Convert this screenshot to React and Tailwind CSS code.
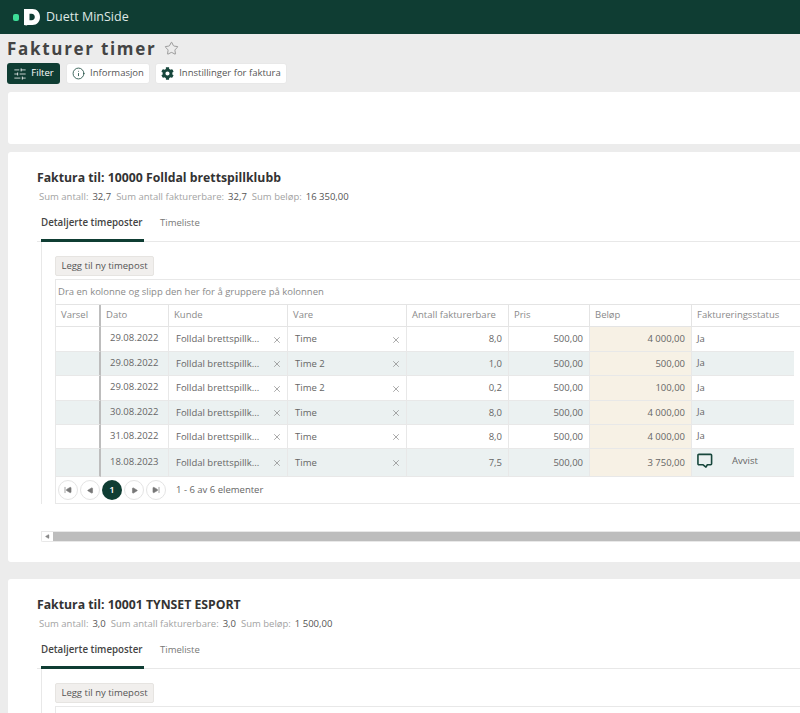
import { Star, SlidersHorizontal, Info, X, SkipBack, SkipForward, Play } from "lucide-react";
import { FaCog } from "react-icons/fa";

const grid = "grid grid-cols-[45px_68px_119px_119px_102px_81px_102px_102px]";
const headGrid = "grid grid-cols-[45px_68px_119px_119px_102px_81px_102px_1fr]";

const rows = [
  { date: "29.08.2022", vare: "Time", ant: "8,0", sum: "4 000,00", h: "h-[25px]" },
  { date: "29.08.2022", vare: "Time 2", ant: "1,0", sum: "500,00", h: "h-[24px]" },
  { date: "29.08.2022", vare: "Time 2", ant: "0,2", sum: "100,00", h: "h-[25px]" },
  { date: "30.08.2022", vare: "Time", ant: "8,0", sum: "4 000,00", h: "h-[24px]" },
  { date: "31.08.2022", vare: "Time", ant: "8,0", sum: "4 000,00", h: "h-[24px]" },
  { date: "18.08.2023", vare: "Time", ant: "7,5", sum: "3 750,00", h: "h-[28px]", rejected: true },
];

function Cell({ className = "", children }) {
  return <div className={`flex items-center border-r border-b border-[#e8e8e8] ${className}`}>{children}</div>;
}

function HeaderCell({ children, className = "" }) {
  return <div className={`flex items-center pl-[5px] border-r border-b border-[#e4e4e4] text-[#8a8a8a] whitespace-nowrap ${className}`}>{children}</div>;
}

function Row({ r, alt }) {
  const bg = alt ? "bg-[#ebf1f1]" : "bg-white";
  return (
    <div className={`${grid} ${r.h} text-[#666] text-[9.5px]`}>
      <Cell className={`${bg} border-r-2 border-r-[#bdbdbd]`} />
      <Cell className={`${bg} pl-[9px] pb-[1px]`}>{r.date}</Cell>
      <Cell className={`${bg} pl-[7px] justify-between pr-[5px] pt-[1px]`}>
        <span>Folldal brettspillk...</span>
        <X size={10} strokeWidth={1.5} className="text-[#777]" />
      </Cell>
      <Cell className={`${bg} pl-[7px] justify-between pr-[5px] pt-[1px]`}>
        <span>{r.vare}</span>
        <X size={10} strokeWidth={1.5} className="text-[#777]" />
      </Cell>
      <Cell className={`${bg} justify-end pr-[6px] pt-[1px]`}>{r.ant}</Cell>
      <Cell className={`${bg} justify-end pr-[6px] pt-[1px]`}>500,00</Cell>
      <Cell className="bg-[#f7f1e5] justify-end pr-[6px] pt-[1px]">{r.sum}</Cell>
      {r.rejected ? (
        <Cell className={`${bg} border-r-0 pl-[5px]`}>
          <svg width="16" height="16" viewBox="0 0 17 17" fill="none" stroke="#17473c" strokeWidth="1.7" strokeLinejoin="round" className="-mt-[3px]">
            <path d="M2.500 1.500h12a1 1 0 0 1 1 1v9a1 1 0 0 1-1 1h-3.500l-1.500 2.500-3-2.500h-4.500a1 1 0 0 1-1-1v-9a1 1 0 0 1 1-1z" />
          </svg>
          <span className="ml-[19px] -mt-[2px]">Avvist</span>
        </Cell>
      ) : (
        <Cell className={`${bg} border-r-0 pl-[5px]`}>Ja</Cell>
      )}
    </div>
  );
}

function PageButton({ children }) {
  return <div className="w-[20px] h-[20px] rounded-full border border-[#e4e4e4] flex items-center justify-center text-[#777]">{children}</div>;
}

function InvoicePanel({ title, stats, withTable, className = "" }) {
  return (
    <section className={`bg-white rounded-[3px] w-[830px] ml-[8px] pl-[29px] ${className}`}>
      <h2 className="text-[12.25px] leading-[18px] font-bold text-[#333]">{title}</h2>
      <div className="mt-[3px] ml-[2px] flex text-[9.5px] leading-[14px] whitespace-nowrap">
        {stats.map(([label, value]) => (
          <span key={label} className="mr-[5px]">
            <span className="text-[#a3a3a3]">{label}:</span>
            <span className="ml-[4px] text-[#555]">{value}</span>
          </span>
        ))}
      </div>
      <div className="mt-[3px] flex text-[9.5px] leading-[14px] border-b border-[#e8e8e8]">
        <div className="w-[103px] h-[35px] ml-[4px] pt-[9px] border-b-[3px] border-[#0f3d33] font-semibold text-[9.750px] text-[#444] whitespace-nowrap -mb-px">
          Detaljerte timeposter
        </div>
        <div className="ml-[16px] pt-[9px] text-[#777]">Timeliste</div>
      </div>
      <div className="ml-[4px] border-l border-[#e8e8e8] pl-[13px] pt-[14px]">
        <button className="h-[20px] w-[99px] bg-[#f1efed] border border-[#e6e4e1] rounded-[2px] text-[9.5px] text-[#555] whitespace-nowrap flex items-center justify-center">
          Legg til ny timepost
        </button>
        {withTable ? (
          <div className="mt-[3px] w-[770px] border-t border-l border-[#e8e8e8] text-[9.5px]">
            <div className="h-[25px] pl-[2px] flex items-center border-b border-[#e4e4e4] text-[#8a8a8a]">
              Dra en kolonne og slipp den her for å gruppere på kolonnen
            </div>
            <div className={`${headGrid} h-[22px]`}>
              <HeaderCell className="border-r-2 border-r-[#bdbdbd]">Varsel</HeaderCell>
              <HeaderCell>Dato</HeaderCell>
              <HeaderCell>Kunde</HeaderCell>
              <HeaderCell>Vare</HeaderCell>
              <HeaderCell>Antall fakturerbare</HeaderCell>
              <HeaderCell>Pris</HeaderCell>
              <HeaderCell>Beløp</HeaderCell>
              <HeaderCell className="border-r-0">Faktureringsstatus</HeaderCell>
            </div>
            {rows.map((r, i) => (
              <Row key={i} r={r} alt={i % 2 === 1} />
            ))}
            <div className="h-[27px] flex items-center pl-[2px] gap-[2px] border-b border-[#e8e8e8] text-[#666]">
              <PageButton><SkipBack size={8} fill="currentColor" /></PageButton>
              <PageButton><Play size={7} fill="currentColor" className="rotate-180" /></PageButton>
              <div className="w-[20px] h-[20px] rounded-full bg-[#0f3d33] text-white font-semibold flex items-center justify-center">1</div>
              <PageButton><Play size={7} fill="currentColor" /></PageButton>
              <PageButton><SkipForward size={8} fill="currentColor" /></PageButton>
              <span className="ml-[8px]">1 - 6 av 6 elementer</span>
            </div>
          </div>
        ) : (
          <div className="mt-[3px] h-[30px] border-t border-l border-[#e8e8e8]" />
        )}
      </div>
      {withTable && (
        <div className="ml-[4px] mt-[27px] h-[11px] flex items-center border-l border-t border-b border-[#e8e8e8] rounded-bl-[2px]">
          <div className="w-[11px] flex justify-center text-[#888]">
            <Play size={5} fill="currentColor" className="rotate-180" />
          </div>
          <div className="flex-1 h-[9px] bg-[#bdbdbd]" />
        </div>
      )}
    </section>
  );
}

export default function App() {
  return (
    <div className="w-[800px] h-[713px] overflow-hidden bg-[#ececec] font-['Open_Sans',sans-serif]">
      <header className="h-[34px] bg-[#0f3d33] flex items-center pl-[13px]">
        <div className="w-[6px] h-[7px] rounded-[2px] bg-[#3ddc97]" />
        <svg width="18" height="18" viewBox="0 0 18 18" className="ml-[4px] -mt-[1px]">
          <path fill="#fff" d="M1 1h8.500c4.500 0 7.500 3.300 7.500 8s-3 8-7.500 8H4.500l-1 .5-2.500-.5zM6.500 5.800v6.400h2.200c1.900 0 3.100-1.300 3.100-3.200s-1.200-3.200-3.100-3.200z" fillRule="evenodd" />
        </svg>
        <span className="ml-[5px] text-[12.5px] text-[#dfe8e5]">Duett MinSide</span>
      </header>

      <div className="pl-[7px] pt-[2px] flex items-center h-[27px]">
        <h1 className="text-[17px] font-bold tracking-[1.7px] text-[#444]">Fakturer timer</h1>
        <Star size={15} strokeWidth={1.3} className="ml-[8px] text-[#888]" />
      </div>

      <div className="pl-[7px] mt-[2px] flex gap-[5px] text-[9.5px]">
        <button className="h-[21px] w-[53px] bg-[#0f3d33] text-white rounded-[3px] flex items-center justify-center gap-[4px]">
          <SlidersHorizontal size={14} strokeWidth={1.3} />
          Filter
        </button>
        <button className="h-[21px] w-[84px] ml-[1px] bg-white text-[#555] rounded-[3px] border border-[#e8e8e8] flex items-center justify-center gap-[5px]">
          <Info size={13} strokeWidth={1.5} className="text-[#17473c]" />
          Informasjon
        </button>
        <button className="h-[21px] w-[132px] bg-white text-[#555] rounded-[3px] border border-[#e8e8e8] flex items-center justify-center gap-[5px] whitespace-nowrap">
          <FaCog size={13} className="text-[#17473c]" />
          Innstillinger for faktura
        </button>
      </div>

      <div className="mt-[8px] ml-[8px] h-[52px] w-[830px] bg-white rounded-[3px]" />

      <InvoicePanel
        className="mt-[8px] h-[410px] pt-[17px]"
        title="Faktura til: 10000 Folldal brettspillklubb"
        stats={[["Sum antall", "32,7"], ["Sum antall fakturerbare", "32,7"], ["Sum beløp", "16 350,00"]]}
        withTable
      />

      <InvoicePanel
        className="mt-[17px] h-[200px] pt-[17px]"
        title="Faktura til: 10001 TYNSET ESPORT"
        stats={[["Sum antall", "3,0"], ["Sum antall fakturerbare", "3,0"], ["Sum beløp", "1 500,00"]]}
      />
    </div>
  );
}
